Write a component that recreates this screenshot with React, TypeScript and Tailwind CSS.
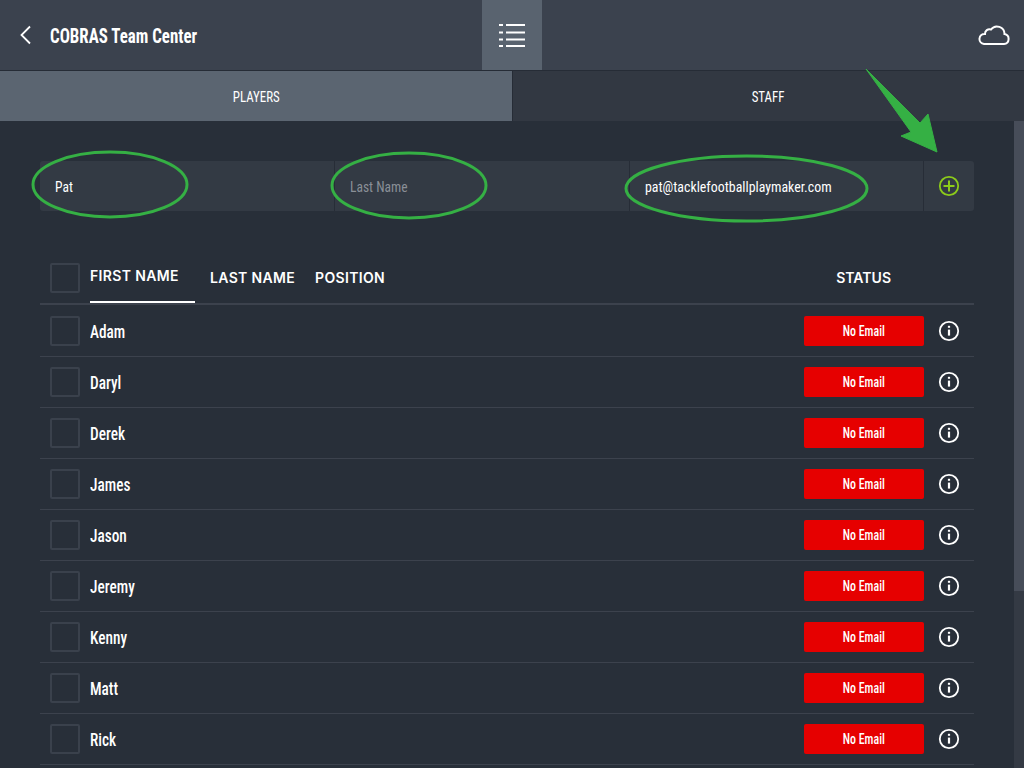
import React from 'react';

const condensed = 'font-["Liberation_Sans_Narrow","Roboto_Condensed","DejaVu_Sans",sans-serif]';
const players = ['Adam', 'Daryl', 'Derek', 'James', 'Jason', 'Jeremy', 'Kenny', 'Matt', 'Rick'];

function InfoIcon() {
  return (
    <svg width="22" height="22" viewBox="0 0 22 22" fill="none" stroke="white">
      <circle cx="11" cy="11" r="9.2" strokeWidth="1.8" />
      <path d="M11 9.6v6" strokeWidth="2.2" />
      <path d="M11 5.8v2" strokeWidth="2.2" />
    </svg>
  );
}

function PlayerRow({ name }: { name: string }) {
  return (
    <div className="flex h-[51px] items-center border-b border-[#3c424d] pl-[10px]">
      <div className="h-[30px] w-[30px] rounded-[2px] border-2 border-[#3a414c]" />
      <div className={`ml-[10px] flex-1 text-[18px] font-medium text-white ${condensed}`}>
        <span className="inline-block origin-left scale-x-[0.85]">{name}</span>
      </div>
      <div className={`flex h-[30px] w-[120px] items-center justify-center rounded-[2px] bg-[#e60000] pt-[1px] text-[14px] font-medium text-white ${condensed}`}>
        <span className="inline-block scale-x-[0.85]">No Email</span>
      </div>
      <div className="flex w-[50px] justify-center"><InfoIcon /></div>
    </div>
  );
}

export default function App() {
  return (
    <div className="relative h-[768px] w-[1024px] overflow-hidden bg-[#282f39] text-white">
      {/* Top bar */}
      <div className="flex h-[71px] border-b border-[#262c36] bg-[#3b424e]">
        <div className="flex w-[482px] items-center pl-[19px]">
          <svg width="12" height="20" viewBox="0 0 12 20" fill="none" stroke="white" strokeWidth="1.8">
            <path d="M11 1.500 2.500 10l8.500 8.500" />
          </svg>
          <div className={`ml-[19px] pt-[1px] text-[20px] font-bold ${condensed}`}>
            <span className="inline-block origin-left scale-x-[0.845]">COBRAS Team Center</span>
          </div>
        </div>
        <div className="flex w-[60px] items-center justify-center bg-[#59636f]">
          <svg width="26" height="24" viewBox="0 0 26 24" fill="none" stroke="white" strokeWidth="1.800">
            <path d="M0 2h4M7 2h19M0 9.500h4M7 9.500h19M0 16.500h4M7 16.500h19M0 23h4M7 23h19" />
          </svg>
        </div>
        <div className="flex flex-1 items-center justify-end pr-[14px]">
          <svg width="32" height="22" viewBox="0 0 32 22" fill="none" stroke="white" strokeWidth="2">
            <path d="M6 20h20a5 5 0 0 0 .5-9.900A7.500 7.500 0 0 0 13 5.500 4.500 4.500 0 0 0 7 10 5 5 0 0 0 6 20Z" />
          </svg>
        </div>
      </div>

      {/* Tabs */}
      <div className={`flex h-[50px] text-[15px] ${condensed}`}>
        <div className="flex w-[512px] items-center justify-center bg-[#5b6571] pt-[2px]">
          <span className="inline-block scale-x-[0.86]">PLAYERS</span>
        </div>
        <div className="flex flex-1 items-center justify-center border-l border-[#262c36] bg-[#323842] pt-[2px]">
          <span className="inline-block scale-x-[0.86]">STAFF</span>
        </div>
      </div>

      <div className="flex">
        <div className="w-[1014px] px-[40px] pt-[40px]">
          {/* Add player form */}
          <div className={`flex h-[50px] rounded-[3px] bg-[#333a44] text-[15px] font-normal ${condensed}`}>
            <div className="flex w-[295px] items-center border-r border-[#272d37] pl-[15px] pt-[2px]">
              <span className="inline-block origin-left scale-x-[0.9]">Pat</span>
            </div>
            <div className="flex w-[295px] items-center border-r border-[#272d37] pl-[15px] pt-[2px] text-[#8a8f97]">
              <span className="inline-block origin-left scale-x-[0.9]">Last Name</span>
            </div>
            <div className="flex w-[294px] items-center border-r border-[#272d37] pl-[15px] pt-[2px]">
              <span className="inline-block origin-left scale-x-[0.925]">pat@tacklefootballplaymaker.com</span>
            </div>
            <div className="flex flex-1 items-center justify-center">
              <svg width="22" height="22" viewBox="0 0 22 22" fill="none" stroke="#8ccb1a">
                <circle cx="11" cy="11" r="9.200" strokeWidth="1.800" />
                <path d="M5.500 11h11M11 5.500v11" strokeWidth="2" />
              </svg>
            </div>
          </div>

          {/* Table header */}
          <div className="mt-[41px] flex h-[53px] items-center border-b-2 border-[#3c424d] pl-[10px] font-['Inter',sans-serif] text-[14px] font-semibold tracking-[0.35px]">
            <div className="h-[30px] w-[30px] rounded-[2px] border-2 border-[#3a414c]" />
            <div className="ml-[10px] flex h-full w-[105px] items-center border-b-2 border-white pb-[2px]">FIRST NAME</div>
            <div className="ml-[15px] w-[105px]">LAST NAME</div>
            <div className="flex-1">POSITION</div>
            <div className="mr-[83px] tracking-normal">STATUS</div>
          </div>

          <div className="pt-[1px]">
            {players.map((name) => (
              <PlayerRow key={name} name={name} />
            ))}
          </div>
        </div>

        {/* Scrollbar */}
        <div className="h-[647px] w-[10px] bg-[#343a44]">
          <div className="h-[470px] bg-[#474d59]" />
        </div>
      </div>

      {/* Green annotations drawn over the screenshot */}
      <svg className="absolute left-0 top-0" width="1024" height="768" fill="none" stroke="#35b044" strokeWidth="3">
        <ellipse cx="110" cy="184.500" rx="77" ry="32.500" />
        <ellipse cx="409" cy="185.500" rx="77" ry="32.500" />
        <ellipse cx="746.500" cy="188.500" rx="120.500" ry="32.500" />
        <path d="M866 69 920 123l8-9 9 38-36-16 10-4Z" fill="#35b044" stroke="#35b044" strokeWidth="1" strokeLinejoin="round" />
      </svg>
    </div>
  );
}
